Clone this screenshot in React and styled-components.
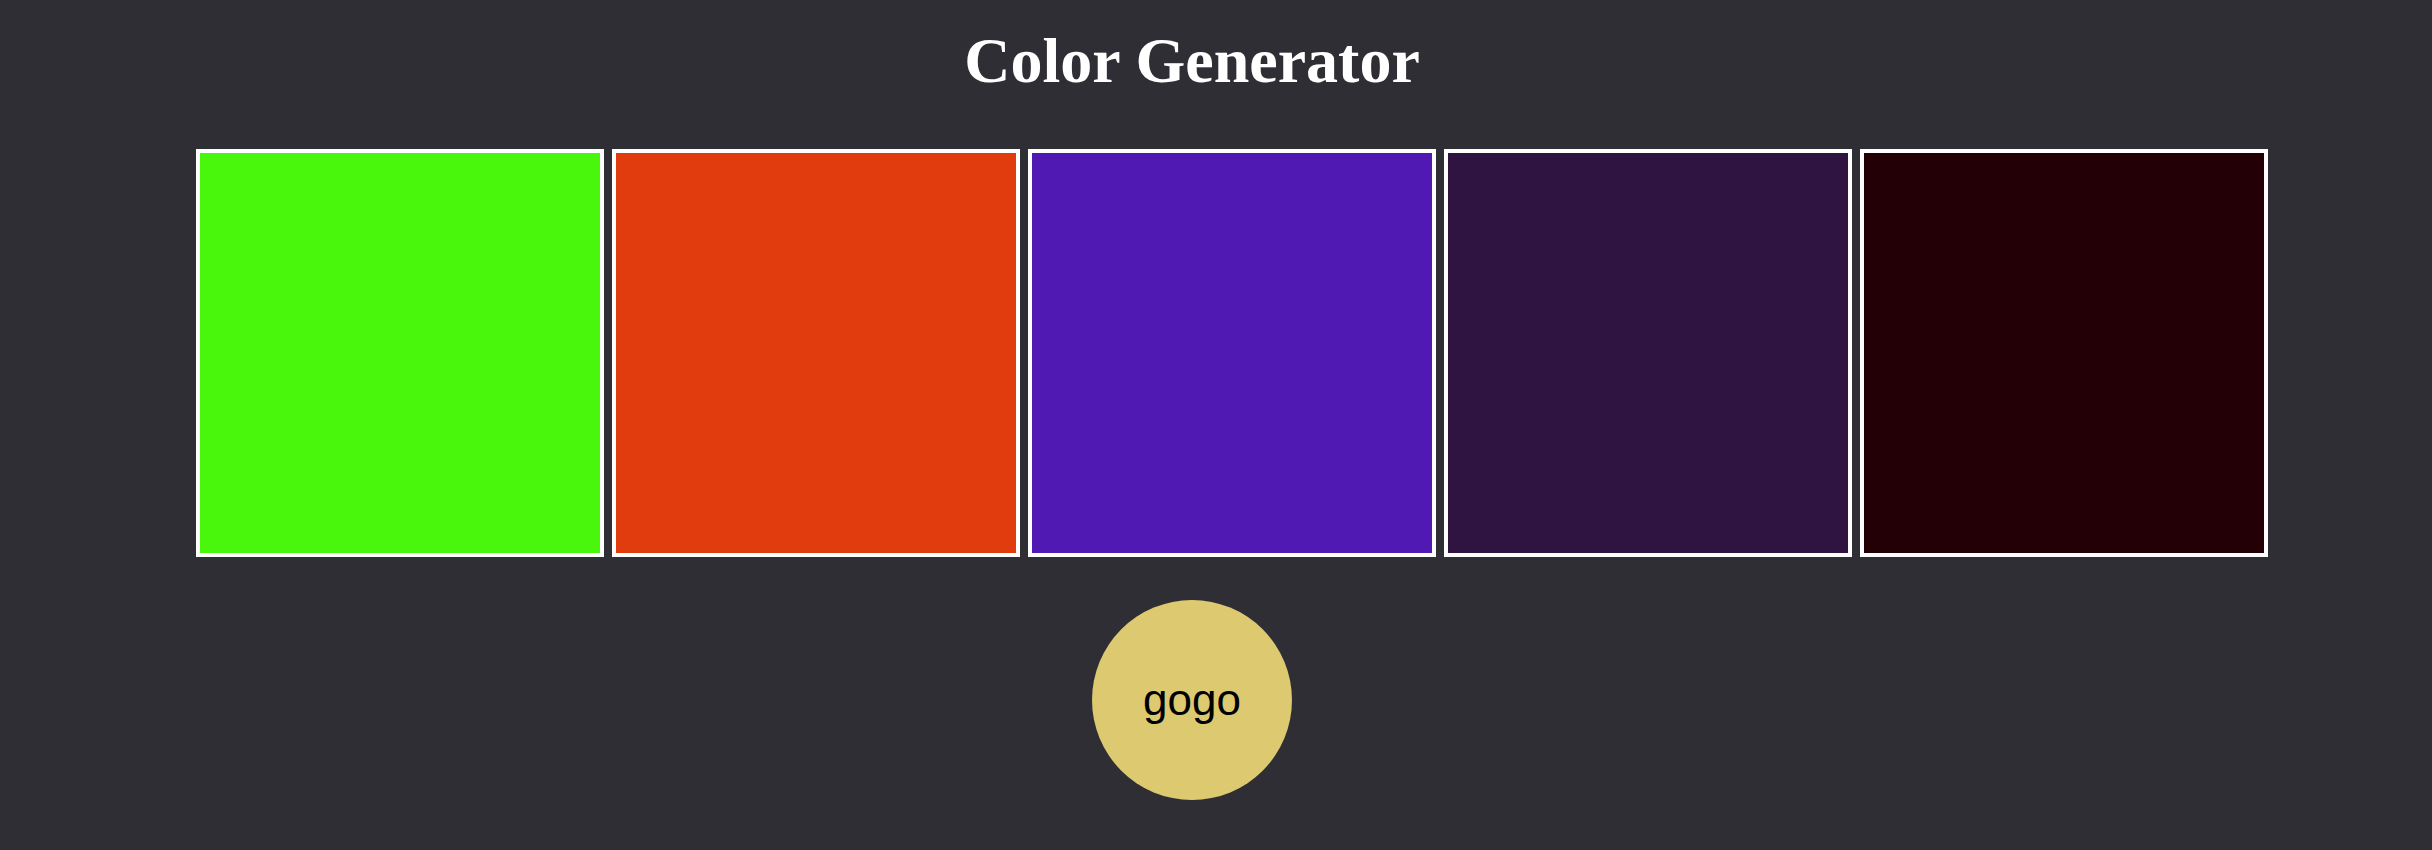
import React from "react";
import styled, { createGlobalStyle } from "styled-components";

const Global = createGlobalStyle`
  html, body { margin: 0; padding: 0; background: #2f2e35; }
`;

const Page = styled.div`
  display: flex;
  flex-direction: column;
  align-items: center;
  padding: 0 56px 60px 8px;
  min-height: 850px;
  box-sizing: border-box;
  background: #2f2e35;
`;

const Title = styled.h1`
  margin: 29px 0 0;
  font-family: "Liberation Serif", "Times New Roman", serif;
  font-weight: 700;
  font-size: 64px;
  line-height: 64px;
  color: #ffffff;
`;

const Row = styled.div`
  display: flex;
  gap: 8px;
  margin-top: 56px;
  padding-left: 80px;
`;

const Swatch = styled.div`
  width: 400px;
  height: 400px;
  border: 4px solid #ffffff;
  background: ${(p) => p.$color};
`;

const GoButton = styled.button`
  margin-top: 43px;
  width: 200px;
  height: 200px;
  border-radius: 50%;
  border: none;
  padding: 0;
  background: #dcc970;
  color: #000000;
  font-family: "Liberation Sans", Arial, sans-serif;
  font-size: 44px;
  cursor: pointer;
`;

const colors = ["#48f70c", "#e03c0d", "#5019b4", "#2f1340", "#230005"];

export default function App() {
  return (
    <>
      <Global />
      <Page>
        <Title>Color Generator</Title>
        <Row>
          {colors.map((c) => (
            <Swatch key={c} $color={c} />
          ))}
        </Row>
        <GoButton>gogo</GoButton>
      </Page>
    </>
  );
}
